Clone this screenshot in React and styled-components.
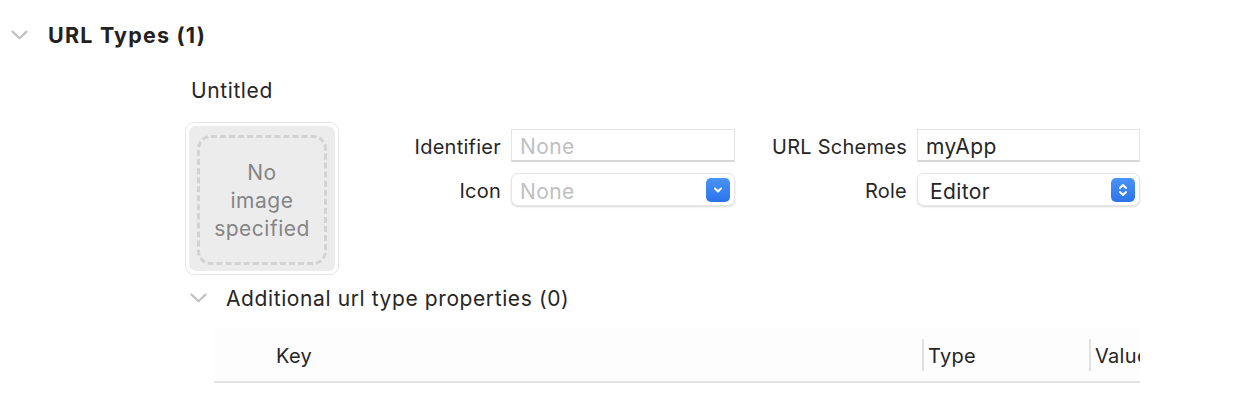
import React from 'react';
import styled, { createGlobalStyle } from 'styled-components';

const Global = createGlobalStyle`
  html, body {
    margin: 0;
    padding: 0;
    background: #ffffff;
  }
  body {
    font-family: Inter, "Liberation Sans", sans-serif;
    color: #262626;
  }
`;

const Page = styled.div`
  width: 1236px;
  height: 410px;
  overflow: hidden;
  padding-top: 20px;
  box-sizing: border-box;
`;

const SectionHeader = styled.div`
  display: flex;
  align-items: center;
  height: 30px;
  padding-left: 11px;
  gap: 20px;
`;

const SectionTitle = styled.div`
  font-size: 21.5px;
  font-weight: 700;
  letter-spacing: 1.2px;
  color: #222;
`;

const Body = styled.div`
  margin-left: 185px;
  padding-top: 26px;
`;

const Subtitle = styled.div`
  font-size: 21px;
  letter-spacing: 0.6px;
  margin-left: 6px;
  height: 28px;
  line-height: 30px;
`;

const TopRow = styled.div`
  display: flex;
  margin-top: 18px;
`;

const ImageWell = styled.div`
  width: 154px;
  height: 153px;
  box-sizing: border-box;
  border-radius: 9px;
  background: #fff;
  border: 1px solid #e6e6e6;
  padding: 3px;
`;

const WellInner = styled.div`
  width: 100%;
  height: 100%;
  box-sizing: border-box;
  background: #ececec;
  border-radius: 7px;
  padding: 9px 8px 6px 8px;
`;

const WellDashed = styled.div`
  width: 100%;
  height: 100%;
  box-sizing: border-box;
  border: 3px dashed #d2d2d2;
  border-radius: 14px;
  display: flex;
  align-items: center;
  justify-content: center;
  text-align: center;
  color: #858585;
  font-size: 21px;
  letter-spacing: 0.5px;
  line-height: 28px;
  padding-top: 2px;
`;

const Form = styled.div`
  display: grid;
  grid-template-columns: 172px 224px 182px 223px;
  grid-auto-rows: 33px;
  row-gap: 11px;
  margin-top: 7px;
  align-items: center;
`;

const Label = styled.div`
  text-align: right;
  padding-right: 10px;
  padding-top: 3px;
  font-size: 20px;
  letter-spacing: 0.25px;
  color: #262626;
`;

const TextField = styled.div`
  height: 33px;
  box-sizing: border-box;
  border: 1px solid #e4e4e4;
  border-bottom: 2px solid #d6d6d6;
  padding: 3px 0 0 8px;
  display: flex;
  align-items: center;
  font-size: 21px;
  letter-spacing: 0.4px;
  color: ${p => (p.$placeholder ? '#c0c0c0' : '#262626')};
`;

const Popup = styled.div`
  height: 33px;
  box-sizing: border-box;
  border-radius: 7px;
  background: #fff;
  border: 1px solid #e6e6e6;
  box-shadow: 0 1px 2px rgba(0, 0, 0, 0.15);
  display: flex;
  align-items: center;
  justify-content: space-between;
  padding: 0 4px 0 ${p => p.$pad || 8}px;
  font-size: 21px;
  letter-spacing: 0.4px;
  color: ${p => (p.$placeholder ? '#c0c0c0' : '#262626')};
`;

const PopupText = styled.span`
  padding-top: 3px;
`;

const BlueButton = styled.div`
  width: 24px;
  height: 24px;
  border-radius: 5px;
  background: linear-gradient(#4a93f8, #2b74eb);
  display: flex;
  align-items: center;
  justify-content: center;
`;

const SubHeader = styled.div`
  display: flex;
  align-items: center;
  gap: 19px;
  margin-top: 8px;
  margin-left: 5px;
  height: 30px;
  font-size: 21px;
  letter-spacing: 0.6px;
`;

const Table = styled.div`
  margin-left: 29px;
  margin-top: 15px;
  width: 926px;
  height: 55px;
  box-sizing: border-box;
  border-bottom: 2px solid #e2e2e2;
  background: #fdfdfd;
  display: grid;
  grid-template-columns: 708px 167px 51px;
  align-items: center;
  overflow: hidden;
`;

const HeaderCell = styled.div`
  font-size: 20px;
  letter-spacing: 0.3px;
  color: #262626;
  white-space: nowrap;
  overflow: hidden;
  padding-left: ${p => p.$pad || 4}px;
  border-left: ${p => (p.$divider ? '2px solid #e2e2e2' : 'none')};
  height: 32px;
  line-height: 34px;
`;

const Chevron = ({ size = 17 }) => (
  <svg width={size} height={size * 0.6} viewBox="0 0 17 10">
    <path d="M1.5 1.5 L8.5 8.2 L15.5 1.5" fill="none" stroke="#c2c2c2" strokeWidth="2.2" strokeLinecap="round" strokeLinejoin="round" />
  </svg>
);

const DownMark = () => (
  <svg width="12" height="12" viewBox="0 0 12 12">
    <path d="M3 4.5 L6 7.5 L9 4.5" fill="none" stroke="#fff" strokeWidth="2" strokeLinecap="round" strokeLinejoin="round" />
  </svg>
);

const UpDownMark = () => (
  <svg width="12" height="18" viewBox="0 0 12 18">
    <path d="M3 7 L6 4 L9 7" fill="none" stroke="#fff" strokeWidth="1.9" strokeLinecap="round" strokeLinejoin="round" />
    <path d="M3 11 L6 14 L9 11" fill="none" stroke="#fff" strokeWidth="1.9" strokeLinecap="round" strokeLinejoin="round" />
  </svg>
);

export default function App() {
  return (
    <Page>
      <Global />
      <SectionHeader>
        <Chevron />
        <SectionTitle>URL Types (1)</SectionTitle>
      </SectionHeader>
      <Body>
        <Subtitle>Untitled</Subtitle>
        <TopRow>
          <ImageWell>
            <WellInner>
              <WellDashed>No<br />image<br />specified</WellDashed>
            </WellInner>
          </ImageWell>
          <Form>
            <Label>Identifier</Label>
            <TextField $placeholder>None</TextField>
            <Label>URL Schemes</Label>
            <TextField>myApp</TextField>
            <Label>Icon</Label>
            <Popup $placeholder>
              <PopupText>None</PopupText>
              <BlueButton><DownMark /></BlueButton>
            </Popup>
            <Label>Role</Label>
            <Popup $pad={12}>
              <PopupText>Editor</PopupText>
              <BlueButton><UpDownMark /></BlueButton>
            </Popup>
          </Form>
        </TopRow>
        <SubHeader>
          <Chevron />
          <span>Additional url type properties (0)</span>
        </SubHeader>
        <Table>
          <HeaderCell $pad={62}>Key</HeaderCell>
          <HeaderCell $divider>Type</HeaderCell>
          <HeaderCell $divider>Value</HeaderCell>
        </Table>
      </Body>
    </Page>
  );
}
